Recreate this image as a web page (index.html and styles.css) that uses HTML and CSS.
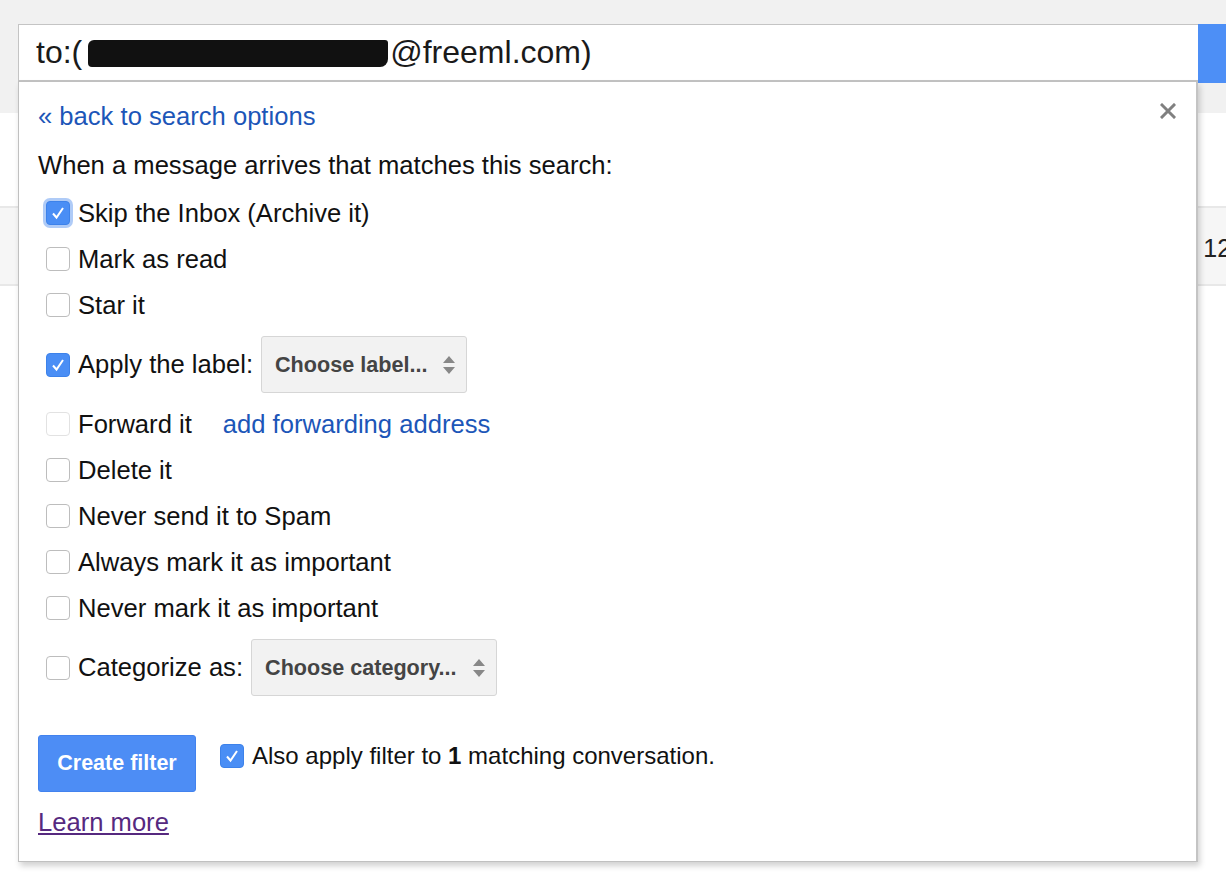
FILE: index.html
```html
<!DOCTYPE html>
<html lang="en">
<head>
    <meta charset="UTF-8">
    <title>Create filter</title>
    <link rel="stylesheet" href="styles.css">
</head>
<body>

<div class="topbar">
    <div class="search-row">
        <div class="search-box">
            <span class="query">to:(<span class="redacted"></span>@freeml.com)</span>
        </div>
        <div class="search-btn"></div>
    </div>
</div>
<div class="toolbar"></div>
<div class="mail-row"><span class="date">12/</span></div>

<div class="filter-panel">
    <div class="panel-head">
        <a class="link" href="#">« back to search options</a>
        <svg class="close" width="16" height="16" viewBox="0 0 16 16">
            <path d="M2 2 L14 14 M14 2 L2 14" stroke="#808080" stroke-width="3" stroke-linecap="square"/>
        </svg>
    </div>
    <p class="intro">When a message arrives that matches this search:</p>

    <div class="options">
        <div class="opt">
            <span class="box checked focus"><svg width="24" height="24" viewBox="0 0 24 24"><path d="M7 12.5 L10.5 16.5 L17 7" fill="none" stroke="#fff" stroke-width="2"/></svg></span>
            <span>Skip the Inbox (Archive it)</span>
        </div>
        <div class="opt">
            <span class="box"></span>
            <span>Mark as read</span>
        </div>
        <div class="opt">
            <span class="box"></span>
            <span>Star it</span>
        </div>
        <div class="opt tall">
            <span class="box checked"><svg width="24" height="24" viewBox="0 0 24 24"><path d="M7 12.5 L10.5 16.5 L17 7" fill="none" stroke="#fff" stroke-width="2"/></svg></span>
            <span>Apply the label:</span>
            <div class="picker label-picker">
                <span>Choose label...</span>
                <svg width="14" height="20" viewBox="0 0 14 20"><path d="M1 8 L7 1 L13 8 Z M1 12 L7 19 L13 12 Z" fill="#888"/></svg>
            </div>
        </div>
        <div class="opt">
            <span class="box disabled"></span>
            <span>Forward it</span>
            <a class="link fwd" href="#">add forwarding address</a>
        </div>
        <div class="opt">
            <span class="box"></span>
            <span>Delete it</span>
        </div>
        <div class="opt">
            <span class="box"></span>
            <span>Never send it to Spam</span>
        </div>
        <div class="opt">
            <span class="box"></span>
            <span>Always mark it as important</span>
        </div>
        <div class="opt">
            <span class="box"></span>
            <span>Never mark it as important</span>
        </div>
        <div class="opt tall">
            <span class="box"></span>
            <span>Categorize as:</span>
            <div class="picker cat-picker">
                <span>Choose category...</span>
                <svg width="14" height="20" viewBox="0 0 14 20"><path d="M1 8 L7 1 L13 8 Z M1 12 L7 19 L13 12 Z" fill="#888"/></svg>
            </div>
        </div>
    </div>

    <div class="actions">
        <button class="create">Create filter</button>
        <div class="also">
            <span class="box checked"><svg width="24" height="24" viewBox="0 0 24 24"><path d="M7 12.5 L10.5 16.5 L17 7" fill="none" stroke="#fff" stroke-width="2"/></svg></span>
            <span>Also apply filter to <b>1</b> matching conversation.</span>
        </div>
    </div>
    <a class="learn" href="#">Learn more</a>
</div>

</body>
</html>
```

FILE: styles.css
```css
body {
    margin: 0;
    background-color: #fff;
    font-family: "Liberation Sans", Arial, sans-serif;
    color: #222;
    overflow: hidden;
    height: 884px;
    position: relative;
}

.topbar {
    background-color: #f1f1f1;
    height: 113px;
    padding-top: 24px;
    box-sizing: border-box;
}

.search-row {
    display: flex;
    margin-left: 18px;
}

.search-box {
    width: 1180px;
    height: 57px;
    box-sizing: border-box;
    background-color: #fff;
    border: 1px solid #c4c4c4;
    border-right: none;
    display: flex;
    align-items: center;
    padding-left: 17px;
}

.query {
    font-size: 32px;
    color: #1a1a1a;
    display: flex;
    align-items: center;
}

.redacted {
    display: inline-block;
    width: 300px;
    height: 27px;
    background-color: #111;
    border-radius: 6px 3px 8px 4px;
    margin: 2px 2px 0 6px;
}

.search-btn {
    flex: 1;
    height: 59px;
    background-color: #4d8ff6;
}

.toolbar {
    height: 95px;
    border-bottom: 2px solid #e8e8e8;
    box-sizing: border-box;
}

.mail-row {
    height: 78px;
    background-color: #f6f6f6;
    border-bottom: 2px solid #e8e8e8;
    box-sizing: border-box;
    display: flex;
    align-items: center;
    justify-content: flex-end;
    padding-top: 4px;
}

.date {
    font-size: 25px;
    color: #222;
    margin-right: -12px;
}

/* the filter dropdown lies over the mail list */
.filter-panel {
    position: absolute;
    top: 81px;
    left: 18px;
    width: 1180px;
    box-sizing: border-box;
    background-color: #fff;
    border: 1px solid #c0c0c0;
    border-right: 2px solid #c4c4c4;
    box-shadow: 2px 4px 6px rgba(0, 0, 0, 0.18);
    padding: 19px 0 24px 19px;
    font-size: 25.6px;
    color: #111;
}

.panel-head {
    display: flex;
    justify-content: space-between;
    align-items: center;
    height: 30px;
    padding-right: 20px;
}

.close {
    margin-top: -10px;
}

.link {
    color: #1c56b8;
    text-decoration: none;
}

.intro {
    margin: 19px 0 10px 0;
    line-height: 30px;
}

.opt {
    display: flex;
    align-items: center;
    height: 46px;
    padding-left: 8px;
}

.opt.tall {
    height: 73px;
}

.box {
    width: 22px;
    height: 22px;
    border: 1px solid #bdbdbd;
    border-radius: 4px;
    background-color: #fff;
    margin-right: 8px;
    flex-shrink: 0;
    display: flex;
    align-items: center;
    justify-content: center;
    position: relative;
}

.box svg {
    flex-shrink: 0;
}

.box.checked {
    background-color: #4a8ef5;
    border-color: #3d82ea;
}

.box.focus {
    box-shadow: 0 0 0 3px rgba(110, 160, 240, 0.55);
}

.box.disabled {
    border-color: #e2e2e2;
}

.picker {
    display: flex;
    align-items: center;
    justify-content: space-between;
    height: 57px;
    box-sizing: border-box;
    background-color: #f2f2f2;
    border: 1px solid #d6d6d6;
    border-radius: 3px;
    font-size: 21.6px;
    font-weight: bold;
    color: #444;
    padding: 0 10px 0 13px;
}

.label-picker {
    width: 206px;
    margin-left: 8px;
}

.cat-picker {
    width: 246px;
    margin-left: 8px;
}

.fwd {
    margin-left: 31px;
}

.actions {
    display: flex;
    align-items: flex-start;
    margin-top: 31px;
}

.create {
    width: 158px;
    height: 57px;
    background-color: #4d8df5;
    border: 1px solid #4282ee;
    border-radius: 3px;
    color: #fff;
    font-family: "Liberation Sans", Arial, sans-serif;
    font-size: 21.5px;
    font-weight: bold;
    padding: 0;
}

.also {
    display: flex;
    align-items: center;
    margin-left: 24px;
    margin-top: 7px;
    font-size: 24px;
}

.also b {
    font-weight: bold;
}

.learn {
    display: block;
    margin-top: 15px;
    line-height: 30px;
    color: #56297f;
    width: max-content;
}
```
